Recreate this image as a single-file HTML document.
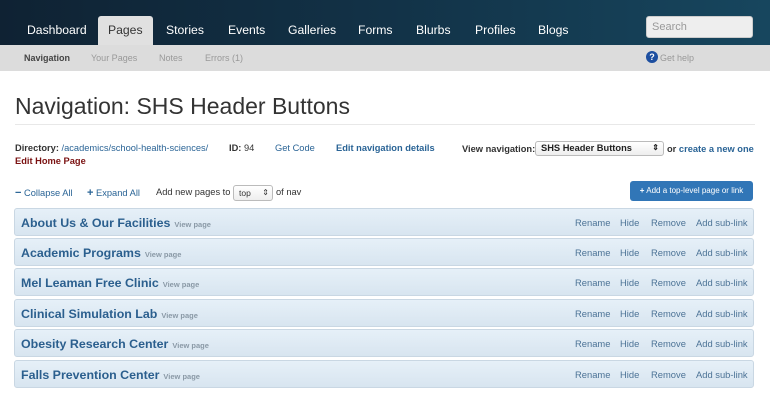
<!DOCTYPE html>
<html><head><style>
*{margin:0;padding:0;box-sizing:border-box}
body{width:770px;height:405px;overflow:hidden;background:#fff;font-family:"Liberation Sans",Arial,sans-serif;position:relative;color:#333}
.top{position:absolute;left:0;top:0;width:770px;height:45px;background:linear-gradient(90deg,#0f2233 0%,#123247 50%,#17465e 100%)}
.top a{position:absolute;top:23px;color:#fff;font-size:12.2px}
.tab{position:absolute;left:98px;top:16px;width:55px;height:29px;background:#e0e0e0;border-radius:3px 3px 0 0}
.search{position:absolute;left:646px;top:16px;width:107px;height:22px;background:#eee;border:1px solid #ccc;border-radius:3px;color:#999;font-size:11px;padding:4px 5px}
.sub{position:absolute;left:0;top:45px;width:770px;height:26px;background:#dcdcdc;font-size:9px}
.sub span{position:absolute;top:8px;color:#999}
h1{position:absolute;left:15px;top:93px;font-size:23px;font-weight:normal;color:#333}
.hr{position:absolute;left:15px;top:124px;width:740px;border-top:1px solid #e8e8e8}
.s{position:absolute;font-size:9.3px;white-space:nowrap}
.lk{color:#2a6496}
.row{position:absolute;left:14px;width:740px;height:28px;background:linear-gradient(#e6f0f8,#d8e5f0);border:1px solid #c9d7e3;border-radius:3px}
.row b{position:absolute;left:6px;top:7px;font-size:12.4px;color:#2b5f8e}
.row b i{font-style:normal;font-size:7.5px;color:#8a99a6;font-weight:bold;margin-left:4px}
.row .a{position:absolute;top:8px;font-size:9.4px;color:#4c7396}
.sel{position:absolute;border:1px solid #bbb;border-radius:3px;background:linear-gradient(#fff,#eee);font-size:9.3px}
</style></head><body>
<div class="top">
<div class="tab"></div>
<a style="left:27px">Dashboard</a>
<a style="left:108px;color:#333">Pages</a>
<a style="left:166px">Stories</a>
<a style="left:228px">Events</a>
<a style="left:288px">Galleries</a>
<a style="left:358px">Forms</a>
<a style="left:416px">Blurbs</a>
<a style="left:475px">Profiles</a>
<a style="left:538px">Blogs</a>
<div class="search">Search</div>
</div>
<div class="sub">
<span style="left:24px;color:#444;font-weight:bold">Navigation</span>
<span style="left:91px">Your Pages</span>
<span style="left:159px">Notes</span>
<span style="left:205px">Errors (1)</span>
<span style="left:646px;top:6px;width:12px;height:12px;border-radius:6px;background:#1d4fa0;color:#fff;font-weight:bold;text-align:center;line-height:12px">?</span>
<span style="left:660px">Get help</span>
</div>
<h1>Navigation: SHS Header Buttons</h1>
<div class="hr"></div>
<div class="s" style="left:15px;top:143px"><b>Directory:</b> <span class="lk">/academics/school-health-sciences/</span></div>
<div class="s" style="left:229px;top:143px"><b>ID:</b> 94</div>
<div class="s lk" style="left:275px;top:143px">Get Code</div>
<div class="s lk" style="left:336px;top:143px;font-weight:bold">Edit navigation details</div>
<div class="s" style="left:15px;top:156px;color:#7a1111;font-weight:bold">Edit Home Page</div>
<div class="s" style="left:462px;top:144px;font-weight:bold">View navigation:</div>
<div class="sel" style="left:535px;top:141px;width:129px;height:15px;padding:1px 5px;font-weight:bold;color:#222">SHS Header Buttons<span style="position:absolute;right:4px;font-size:8px">⇕</span></div>
<div class="s" style="left:667px;top:144px"><b>or</b> <span class="lk" style="font-weight:bold">create a new one</span></div>
<div class="s lk" style="left:15px;top:187px"><b style="font-size:11px">−</b> Collapse All</div>
<div class="s lk" style="left:87px;top:187px"><b style="font-size:11px">+</b> Expand All</div>
<div class="s" style="left:156px;top:187px">Add new pages to</div>
<div class="sel" style="left:233px;top:185px;width:40px;height:16px;padding:2px 5px;font-size:8.5px">top<span style="position:absolute;right:3px;font-size:8px">⇕</span></div>
<div class="s" style="left:276px;top:187px">of nav</div>
<div style="position:absolute;left:630px;top:181px;width:123px;height:20px;background:#3176b7;border-radius:3px;color:#fff;font-size:8px;line-height:20px;text-align:center"><b>+</b> Add a top-level page or link</div>

<div class="row" style="top:208px"><b>About Us &amp; Our Facilities<i>View page</i></b><span class="a" style="left:560px">Rename</span><span class="a" style="left:605px">Hide</span><span class="a" style="left:636px">Remove</span><span class="a" style="left:681px">Add sub-link</span></div>
<div class="row" style="top:238px"><b>Academic Programs<i>View page</i></b><span class="a" style="left:560px">Rename</span><span class="a" style="left:605px">Hide</span><span class="a" style="left:636px">Remove</span><span class="a" style="left:681px">Add sub-link</span></div>
<div class="row" style="top:268px"><b>Mel Leaman Free Clinic<i>View page</i></b><span class="a" style="left:560px">Rename</span><span class="a" style="left:605px">Hide</span><span class="a" style="left:636px">Remove</span><span class="a" style="left:681px">Add sub-link</span></div>
<div class="row" style="top:299px"><b>Clinical Simulation Lab<i>View page</i></b><span class="a" style="left:560px">Rename</span><span class="a" style="left:605px">Hide</span><span class="a" style="left:636px">Remove</span><span class="a" style="left:681px">Add sub-link</span></div>
<div class="row" style="top:329px"><b>Obesity Research Center<i>View page</i></b><span class="a" style="left:560px">Rename</span><span class="a" style="left:605px">Hide</span><span class="a" style="left:636px">Remove</span><span class="a" style="left:681px">Add sub-link</span></div>
<div class="row" style="top:360px"><b>Falls Prevention Center<i>View page</i></b><span class="a" style="left:560px">Rename</span><span class="a" style="left:605px">Hide</span><span class="a" style="left:636px">Remove</span><span class="a" style="left:681px">Add sub-link</span></div>
</body></html>
